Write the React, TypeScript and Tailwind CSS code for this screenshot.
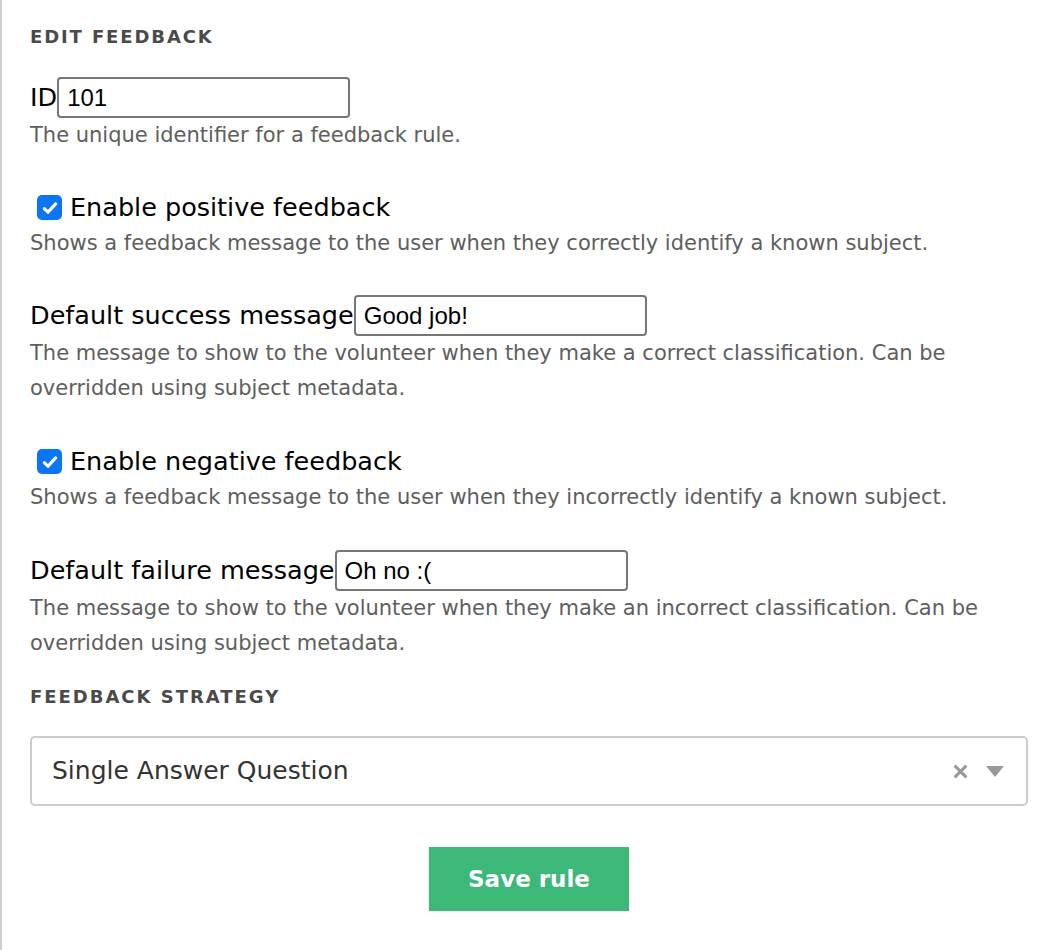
import React from "react";

const sans = "font-['DejaVu_Sans',sans-serif]";

function Check() {
  return (
    <span className="flex h-[25px] w-[25px] shrink-0 items-center justify-center rounded-[5px] bg-[#0b76f5]">
      <svg width="18" height="18" viewBox="0 0 16 16" fill="none">
        <path d="M3 8.5l3.2 3.3L13 4.3" stroke="white" strokeWidth="2.8" strokeLinecap="round" strokeLinejoin="round" />
      </svg>
    </span>
  );
}

function TextInput({ value }: { value: string }) {
  return (
    <input
      readOnly
      value={value}
      className="h-[41px] w-[293px] rounded-[4px] border-2 border-[#767676] bg-white px-[8px] font-['Liberation_Sans',Arial,sans-serif] text-[24px] text-black outline-none"
    />
  );
}

function Help({ children }: { children: React.ReactNode }) {
  return <p className="text-[21px] leading-[35px] text-[#5e5e5e]">{children}</p>;
}

export default function App() {
  return (
    <div className={`min-h-screen border-l-2 border-[#cfcfcf] bg-white pl-[28px] pr-[24px] pt-[26px] ${sans}`}>
      <h3 className="text-[18px] font-bold leading-[22px] tracking-[0.105em] text-[#4a4a4a]">EDIT FEEDBACK</h3>

      <label className="mt-[29px] flex items-center text-[25.5px] text-black">
        ID
        <TextInput value="101" />
      </label>
      <Help>The unique identifier for a feedback rule.</Help>

      <label className="mt-[36px] flex h-[37px] items-center gap-[8px] pl-[7px] text-[25.5px] text-black">
        <Check />
        Enable positive feedback
      </label>
      <Help>Shows a feedback message to the user when they correctly identify a known subject.</Help>

      <label className="mt-[34px] flex items-center text-[25.5px] text-black">
        Default success message
        <TextInput value="Good job!" />
      </label>
      <Help>
        The message to show to the volunteer when they make a correct classification. Can be overridden using
        subject metadata.
      </Help>

      <label className="mt-[37px] flex h-[37px] items-center gap-[8px] pl-[7px] text-[25.5px] text-black">
        <Check />
        Enable negative feedback
      </label>
      <Help>Shows a feedback message to the user when they incorrectly identify a known subject.</Help>

      <label className="mt-[35px] flex items-center text-[25.5px] text-black">
        Default failure message
        <TextInput value="Oh no :(" />
      </label>
      <Help>
        The message to show to the volunteer when they make an incorrect classification. Can be overridden using
        subject metadata.
      </Help>

      <h3 className="mt-[25px] text-[18px] font-bold leading-[22px] tracking-[0.11em] text-[#4a4a4a]">
        FEEDBACK STRATEGY
      </h3>

      <div className="mt-[28px] flex h-[70px] items-center rounded-[5px] border-2 border-[#cccccc] pl-[20px] pr-[22px]">
        <span className="flex-1 text-[25px] text-[#333333]">Single Answer Question</span>
        <svg width="17" height="17" viewBox="0 0 16 16" className="mr-[17px]">
          <path d="M2.5 2.5l11 11M13.5 2.5l-11 11" stroke="#999999" strokeWidth="2.8" />
        </svg>
        <svg width="18" height="11" viewBox="0 0 18 11">
          <path d="M0 0h18L9 11z" fill="#999999" />
        </svg>
      </div>

      <div className="mt-[41px] flex justify-center">
        <button className="h-[64px] w-[200px] bg-[#3cb878] text-[23px] font-bold text-white">Save rule</button>
      </div>
    </div>
  );
}
